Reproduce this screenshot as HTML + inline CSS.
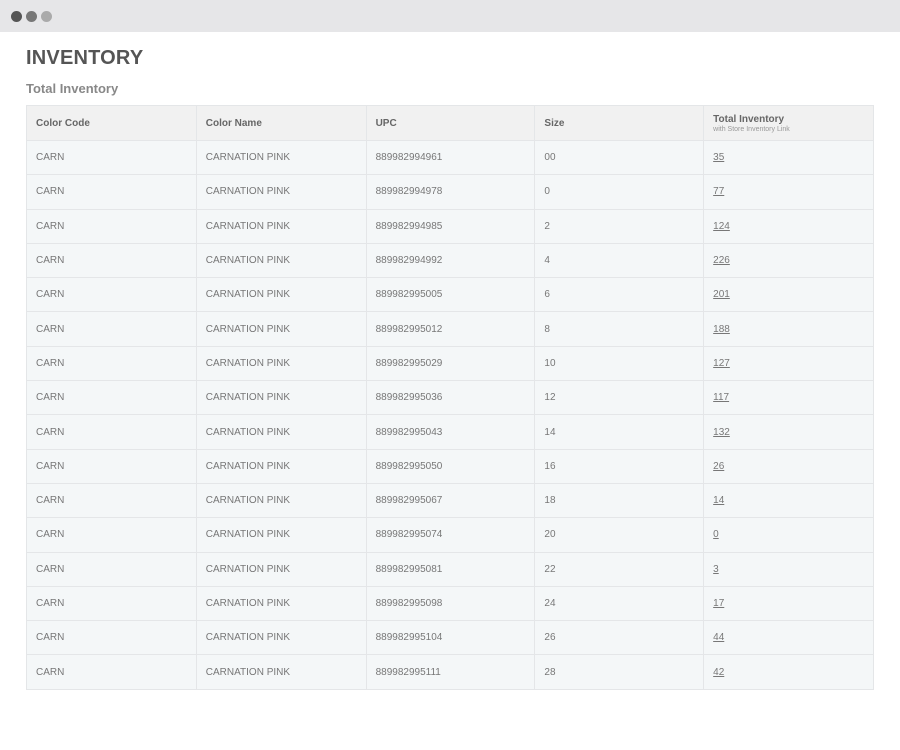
<!DOCTYPE html>
<html><head><style>
body{margin:0;width:900px;height:750px;background:#fff;font-family:"Liberation Sans",sans-serif;overflow:hidden}
.bar{height:32px;background:#e6e6e8;position:relative}
.d{position:absolute;top:11px;width:11px;height:11px;border-radius:50%}
h1{position:absolute;left:26px;top:47px;margin:0;font-size:20px;color:#555;font-weight:bold;letter-spacing:0.2px}
h2{position:absolute;left:26px;top:81px;margin:0;font-size:13px;color:#888;font-weight:bold}
table{position:absolute;left:26px;top:105px;width:848px;border-collapse:collapse;font-size:10px;color:#777}
td,th{border:1px solid #e4e6e8;padding:0 0 0 9px;text-align:left;height:33.3px}
th{background:#f1f1f1;font-weight:bold;color:#666;height:34px;font-size:10px}
td{background:#f4f7f8}
th small{display:block;font-weight:normal;font-size:7px;color:#999;margin-top:1px}
u{color:#777}
</style></head><body>
<div class="bar"><div class="d" style="left:11px;background:#555"></div><div class="d" style="left:26px;background:#777"></div><div class="d" style="left:41px;background:#aaa"></div></div>
<h1>INVENTORY</h1><h2>Total Inventory</h2>
<table>
<colgroup><col style="width:170px"><col style="width:170px"><col style="width:169px"><col style="width:169px"><col style="width:170px"></colgroup>
<tr><th>Color Code</th><th>Color Name</th><th>UPC</th><th>Size</th><th>Total Inventory<small>with Store Inventory Link</small></th></tr>
<tr><td>CARN</td><td>CARNATION PINK</td><td>889982994961</td><td>00</td><td><u>35</u></td></tr>
<tr><td>CARN</td><td>CARNATION PINK</td><td>889982994978</td><td>0</td><td><u>77</u></td></tr>
<tr><td>CARN</td><td>CARNATION PINK</td><td>889982994985</td><td>2</td><td><u>124</u></td></tr>
<tr><td>CARN</td><td>CARNATION PINK</td><td>889982994992</td><td>4</td><td><u>226</u></td></tr>
<tr><td>CARN</td><td>CARNATION PINK</td><td>889982995005</td><td>6</td><td><u>201</u></td></tr>
<tr><td>CARN</td><td>CARNATION PINK</td><td>889982995012</td><td>8</td><td><u>188</u></td></tr>
<tr><td>CARN</td><td>CARNATION PINK</td><td>889982995029</td><td>10</td><td><u>127</u></td></tr>
<tr><td>CARN</td><td>CARNATION PINK</td><td>889982995036</td><td>12</td><td><u>117</u></td></tr>
<tr><td>CARN</td><td>CARNATION PINK</td><td>889982995043</td><td>14</td><td><u>132</u></td></tr>
<tr><td>CARN</td><td>CARNATION PINK</td><td>889982995050</td><td>16</td><td><u>26</u></td></tr>
<tr><td>CARN</td><td>CARNATION PINK</td><td>889982995067</td><td>18</td><td><u>14</u></td></tr>
<tr><td>CARN</td><td>CARNATION PINK</td><td>889982995074</td><td>20</td><td><u>0</u></td></tr>
<tr><td>CARN</td><td>CARNATION PINK</td><td>889982995081</td><td>22</td><td><u>3</u></td></tr>
<tr><td>CARN</td><td>CARNATION PINK</td><td>889982995098</td><td>24</td><td><u>17</u></td></tr>
<tr><td>CARN</td><td>CARNATION PINK</td><td>889982995104</td><td>26</td><td><u>44</u></td></tr>
<tr><td>CARN</td><td>CARNATION PINK</td><td>889982995111</td><td>28</td><td><u>42</u></td></tr>
</table>
</body></html>
